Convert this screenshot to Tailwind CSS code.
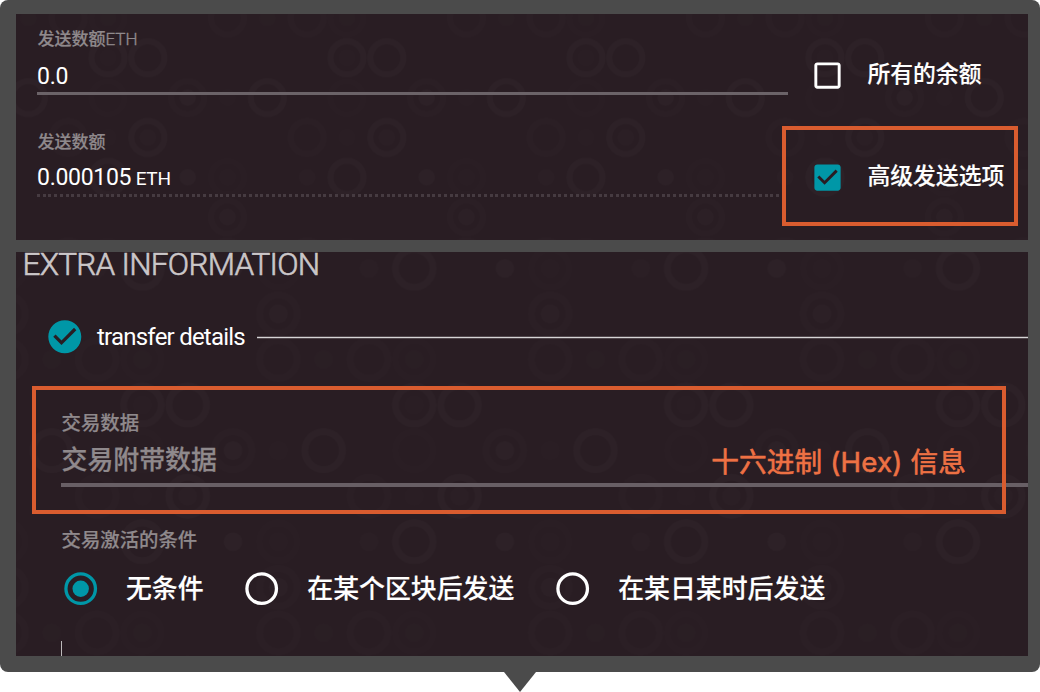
<!DOCTYPE html>
<html lang="zh-CN">
<head>
<meta charset="utf-8">
<title>发送选项</title>
<script src="https://cdn.jsdelivr.net/npm/@tailwindcss/browser@4"></script>
</head>
<body class="bg-white w-[1040px] h-[692px] overflow-hidden font-['Roboto','Noto_Sans_CJK_SC',sans-serif] text-white whitespace-nowrap">
<svg class="hidden">
  <defs>
    <g id="tile" fill="none" stroke="#fff" stroke-width="1.55">
      <g stroke-opacity=".03">
        <circle cx="5" cy="5" r="4.15"/><circle cx="5" cy="35" r="4.15"/><circle cx="15" cy="35" r="4.15"/>
        <circle cx="45" cy="45" r="4.15"/><circle cx="15" cy="55" r="4.15"/>
      </g>
      <g stroke-opacity=".02">
        <circle cx="55" cy="25" r="4.15"/><circle cx="25" cy="45" r="4.15"/><circle cx="55" cy="55" r="4.15"/>
        <circle cx="35" cy="25" r="4.15"/><circle cx="35" cy="15" r="4.15"/>
      </g>
      <g stroke-opacity=".008">
        <circle cx="5" cy="25" r="4.15"/><circle cx="5" cy="45" r="4.15"/><circle cx="35" cy="5" r="4.15"/>
      </g>
      <g fill="#fff" stroke="none">
        <circle cx="25" cy="5" r="2.07" fill-opacity=".03"/><circle cx="25" cy="45" r="2.07" fill-opacity=".03"/>
        <circle cx="35" cy="15" r="2.07" fill-opacity=".026"/><circle cx="55" cy="5" r="2.07" fill-opacity=".02"/>
        <circle cx="35" cy="5" r="2.07" fill-opacity=".012"/><circle cx="5" cy="25" r="2.07" fill-opacity=".015"/>
        <circle cx="45" cy="25" r="2.07" fill-opacity=".015"/><circle cx="5" cy="35" r="2.07" fill-opacity=".012"/>
        <circle cx="35" cy="45" r="2.07" fill-opacity=".012"/><circle cx="15" cy="55" r="2.07" fill-opacity=".018"/>
        <circle cx="5" cy="55" r="2.07" fill-opacity=".012"/>
      </g>
    </g>
  </defs>
</svg>
<main class="relative w-[1040px] h-[672px] rounded-lg bg-[#4b4b4b] pl-4 pr-3 pt-3.5 flex flex-col gap-3">

  <section class="relative h-[226px] bg-[#291d23] overflow-hidden">
    <svg class="absolute inset-0 w-full h-full opacity-65"><defs><pattern id="p1" width="60" height="60" patternUnits="userSpaceOnUse" patternTransform="translate(550.1 143.4) scale(3.983)"><use href="#tile"/></pattern></defs><rect width="100%" height="100%" fill="url(#p1)"/></svg>
    <div class="relative flex flex-col pl-[21px] pt-[13px]">
      <div class="flex h-[102px]">
        <div class="w-[751px] flex flex-col">
          <label class="h-6 pl-[0.5px] leading-[24px] text-[17px] text-[#8f898c]"><span class="font-medium [-webkit-text-stroke:0.2px]">发送数额</span><span class="font-light [-webkit-text-stroke:0.4px]">ETH</span></label>
          <div class="h-[41px] leading-[51px] text-[23px] tracking-[-0.3px]">0.0</div>
          <div class="h-[3px] bg-[#6b6368]"></div>
        </div>
        <div class="flex items-center h-[69px] pt-[27px] ml-[22px]">
          <svg class="w-[35px] h-[35px] shrink-0" viewBox="0 0 24 24" fill="#fff"><path d="M19 5v14H5V5h14m0-2H5c-1.1 0-2 .9-2 2v14c0 1.1.9 2 2 2h14c1.1 0 2-.9 2-2V5c0-1.1-.9-2-2-2z"/></svg>
          <span class="ml-[22.5px] text-[22.8px] leading-8 font-medium [-webkit-text-stroke:0.15px]">所有的余额</span>
        </div>
      </div>
      <div class="flex h-[102px]">
        <div class="w-[751px] flex flex-col">
          <label class="h-6 pl-[0.5px] leading-[26px] text-[17px] text-[#8f898c] font-medium [-webkit-text-stroke:0.2px]">发送数额</label>
          <div class="h-[41px] leading-[49px] text-[23px] tracking-[-0.3px]">0.000105<span class="text-[19px] ml-[4.5px]">ETH</span></div>
          <div class="h-[3px] bg-[repeating-linear-gradient(90deg,#463b41_0px,#463b41_3px,transparent_3px,transparent_5.73px)]"></div>
        </div>
        <div class="flex items-center h-[69px] pt-[27px] ml-[22px]">
          <svg class="w-[35px] h-[35px] shrink-0" viewBox="0 0 24 24" fill="#0097a7"><path d="M19 3H5c-1.11 0-2 .9-2 2v14c0 1.1.89 2 2 2h14c1.11 0 2-.9 2-2V5c0-1.1-.89-2-2-2zm-9 14l-5-5 1.41-1.41L10 14.17l7.59-7.59L19 8l-9 9z"/></svg>
          <span class="ml-[22.5px] text-[22.8px] leading-8 font-medium [-webkit-text-stroke:0.15px]">高级发送选项</span>
        </div>
      </div>
    </div>
    <div class="absolute left-[766px] top-[112px] w-[236px] h-[100px] border-4 border-[#d95c2f]"></div>
  </section>

  <section class="relative h-[404px] bg-[#291d23] overflow-hidden">
    <svg class="absolute inset-0 w-full h-full opacity-65"><defs><pattern id="p2" width="60" height="60" patternUnits="userSpaceOnUse" patternTransform="translate(375.6 -6.4) scale(4.531 4.556)"><use href="#tile"/></pattern></defs><rect width="100%" height="100%" fill="url(#p2)"/></svg>
    <div class="relative flex flex-col">
      <h1 class="h-[65px] pl-[6.5px] leading-[25px] text-[31.5px] font-light text-[#cac6c8] tracking-[-0.73px] [-webkit-text-stroke:0.6px]">EXTRA INFORMATION</h1>
      <div class="flex items-center h-10 pl-[29px]">
        <svg class="w-[39.6px] h-[39.6px] shrink-0" viewBox="0 0 24 24" fill="#0097a7"><path d="M12 2C6.48 2 2 6.48 2 12s4.48 10 10 10 10-4.48 10-10S17.52 2 12 2zm-2 15l-5-5 1.41-1.41L10 14.17l7.59-7.59L19 8l-9 9z"/></svg>
        <h2 class="w-[148px] ml-[12.4px] text-[24px] leading-10 tracking-[-0.77px]">transfer details</h2>
        <div class="flex-1 ml-[12px] mt-[1px] h-[3px] border-y border-[#51474c] bg-[#d6d4d5]"></div>
      </div>
      <div class="flex flex-col pl-[45px] pt-[52px]">
        <label class="h-[28px] pl-[0.5px] leading-[30px] text-[19.4px] font-medium text-[#8f898c] [-webkit-text-stroke:0.2px]">交易数据</label>
        <div class="flex justify-between h-[46px] pr-[62px]">
          <span class="pl-[0.5px] text-[25.9px] leading-[46px] font-medium text-[#8f898c] [-webkit-text-stroke:0.25px]">交易附带数据</span>
          <span class="text-[27.6px] leading-[51px] tracking-[0.2px] text-[#ee7144] font-['Inter','Noto_Sans_CJK_SC',sans-serif] [-webkit-text-stroke:0.6px]">十六进制 (Hex) 信息</span>
        </div>
        <div class="h-1 bg-[#685f65]"></div>
        <label class="h-[28px] pl-[0.5px] mt-[39px] leading-[30px] text-[19.4px] font-medium text-[#8f898c] [-webkit-text-stroke:0.2px]">交易激活的条件</label>
        <div class="flex items-center h-10 mt-[15px] text-[25.9px] leading-10 font-medium [-webkit-text-stroke:0.15px]">
          <svg class="w-[39.4px] h-[39.4px] shrink-0" viewBox="0 0 24 24" fill="#0097a7"><path fill-rule="evenodd" d="M12 2a10 10 0 1 0 0 20 10 10 0 0 0 0-20zm0 2a8 8 0 1 1 0 16 8 8 0 0 1 0-16z"/><circle cx="12" cy="12" r="5"/></svg>
          <span class="w-[116px] pl-[25.5px]">无条件</span>
          <svg class="w-[39.4px] h-[39.4px] ml-[25.5px] shrink-0" viewBox="0 0 24 24" fill="none" stroke="#fff" stroke-width="2"><circle cx="12" cy="12" r="9"/></svg>
          <span class="w-[246px] pl-[26px]">在某个区块后发送</span>
          <svg class="w-[39.4px] h-[39.4px] ml-[26px] shrink-0" viewBox="0 0 24 24" fill="none" stroke="#fff" stroke-width="2"><circle cx="12" cy="12" r="9"/></svg>
          <span class="pl-[25.5px]">在某日某时后发送</span>
        </div>
        <div class="w-px h-[15px] mt-[32px] bg-[#bdbabb]"></div>
      </div>
    </div>
    <div class="absolute left-[16px] top-[134px] w-[974px] h-[128px] border-4 border-[#d95c2f]"></div>
  </section>
</main>
<svg class="block mx-auto w-8 h-5" viewBox="0 0 32 20"><path d="M0 0h32L16 20z" fill="#4b4b4b"/></svg>
</body>
</html>
